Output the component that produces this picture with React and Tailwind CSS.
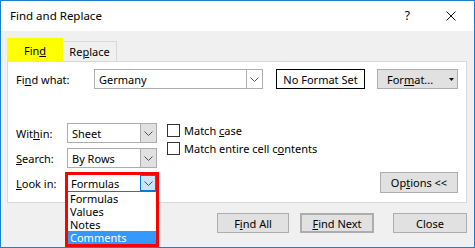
import React from 'react';

const Chevron = () => (
  <svg width="9" height="5" viewBox="0 0 9 5" fill="none">
    <path d="M0.5 0.5 L4.5 4.5 L8.5 0.5" stroke="#505050" strokeWidth="1" />
  </svg>
);

const Combo = ({ value, width, arrow = 'gray' }) => (
  <div className={`${width} h-[20px] border border-[#adadad] bg-white flex`}>
    <span className="flex-1 pl-[4px] flex items-center">{value}</span>
    <div
      className={`w-[16px] border-l border-[#adadad] flex items-center justify-center ${
        arrow === 'gray' ? 'bg-[#e1e1e1]' : 'bg-white'
      }`}
    >
      <Chevron />
    </div>
  </div>
);

const Checkbox = ({ children }) => (
  <div className="flex items-center h-[13px]">
    <div className="w-[13px] h-[13px] border border-[#333333] bg-white"></div>
    <span className="ml-[4px]">{children}</span>
  </div>
);

const Button = ({ children, className = '' }) => (
  <div
    className={`h-[20px] bg-[#e1e1e1] border border-[#adadad] flex items-center justify-center ${className}`}
  >
    {children}
  </div>
);

export default function App() {
  const items = ['Formulas', 'Values', 'Notes', 'Comments'];

  return (
    <div className="w-[475px] h-[248px] overflow-hidden bg-[#f0f0f0] border border-[#1a7fd4] flex flex-col font-['Noto_Sans',sans-serif] text-[11px] text-black leading-none">
      {/* Title bar */}
      <div className="h-[30px] bg-white flex items-center shrink-0">
        <span className="ml-[9px] text-[11.5px]">Find and Replace</span>
        <span className="ml-auto text-[12px]">?</span>
        <svg className="ml-[36px] mr-[18px]" width="10" height="10" viewBox="0 0 10 10">
          <path d="M0.5 0.5 L9.5 9.5 M9.5 0.5 L0.5 9.5" stroke="#111" strokeWidth="1" />
        </svg>
      </div>

      <div className="flex-1 pl-[6px] pt-[7px] flex flex-col">
        {/* Tabs */}
        <div className="flex items-end h-[23px]">
          <div className="w-[56px] h-[24px] -mb-[1px] bg-[#ffff00] flex items-center justify-center relative z-10">
            <span>
              Fin<span className="underline">d</span>
            </span>
          </div>
          <div className="w-[54px] h-[20px] border border-b-0 border-l-0 border-[#d9d9d9] flex items-center justify-center">
            <span>
              Re<span className="underline">p</span>lace
            </span>
          </div>
        </div>

        {/* Panel */}
        <div className="w-[460px] h-[142px] bg-white border border-[#d9d9d9] flex flex-col">
          {/* Find what row */}
          <div className="mt-[7px] pl-[8px] flex items-center h-[20px]">
            <span className="w-[78px]">
              Fi<span className="underline">n</span>d what:
            </span>
            <Combo value="Germany" width="w-[169px]" arrow="white" />
            <div className="ml-[13px] w-[89px] h-[20px] border border-black flex items-center justify-center">
              No Format Set
            </div>
            <div className="ml-[12px] w-[81px] h-[20px] bg-[#e1e1e1] border border-[#adadad] flex items-center pl-[9px]">
              <span>
                For<span className="underline">m</span>at...
              </span>
              <svg className="ml-auto mr-[3px]" width="5" height="3" viewBox="0 0 5 3">
                <path d="M0 0 L5 0 L2.5 3 Z" fill="#111" />
              </svg>
            </div>
          </div>

          {/* Options area */}
          <div className="mt-[34px] pl-[8px] flex">
            <div className="flex flex-col gap-[5px]">
              <div className="flex items-center h-[20px]">
                <span className="w-[51px]">
                  Wit<span className="underline">h</span>in:
                </span>
                <Combo value="Sheet" width="w-[90px]" />
              </div>
              <div className="flex items-center h-[20px]">
                <span className="w-[51px]">
                  <span className="underline">S</span>earch:
                </span>
                <Combo value="By Rows" width="w-[90px]" />
              </div>
              <div className="flex items-center h-[20px]">
                <span className="w-[51px]">
                  <span className="underline">L</span>ook in:
                </span>
                <div className="relative w-[90px] h-[20px]">
                  {/* open dropdown, highlighted */}
                  <div className="absolute -left-[2px] -top-[1px] w-[94px] h-[75px] border-[3px] border-[#ff0000] bg-white z-20 flex flex-col">
                    <div className="h-[17px] flex border-b border-[#646464]">
                      <span className="flex-1 pl-[3px] flex items-center">Formulas</span>
                      <div className="w-[16px] border border-[#0078d7] bg-[#cce4f7] flex items-center justify-center">
                        <Chevron />
                      </div>
                    </div>
                    {items.map((item) => (
                      <div
                        key={item}
                        className={`h-[13px] pl-[2px] flex items-center ${
                          item === 'Comments' ? 'bg-[#3399ff] text-white' : ''
                        }`}
                      >
                        {item}
                      </div>
                    ))}
                  </div>
                </div>
              </div>
            </div>

            <div className="ml-[10px] pt-[1px] flex flex-col gap-[5px]">
              <Checkbox>
                Match <span className="underline">c</span>ase
              </Checkbox>
              <Checkbox>
                Match entire cell c<span className="underline">o</span>ntents
              </Checkbox>
            </div>

            <Button className="ml-auto mr-[8px] self-end w-[78px] h-[21px]">
              <span>
                Op<span className="underline">t</span>ions &lt;&lt;
              </span>
            </Button>
          </div>
        </div>

        {/* Bottom buttons */}
        <div className="mt-[10px] flex">
          <Button className="ml-[210px] w-[72px]">
            <span>
              F<span className="underline">i</span>nd All
            </span>
          </Button>
          <Button className="ml-[11px] w-[74px] border-2 border-[#0078d7]">
            <span>
              <span className="underline">F</span>ind Next
            </span>
          </Button>
          <Button className="ml-[19px] w-[74px]">Close</Button>
        </div>
      </div>
    </div>
  );
}
